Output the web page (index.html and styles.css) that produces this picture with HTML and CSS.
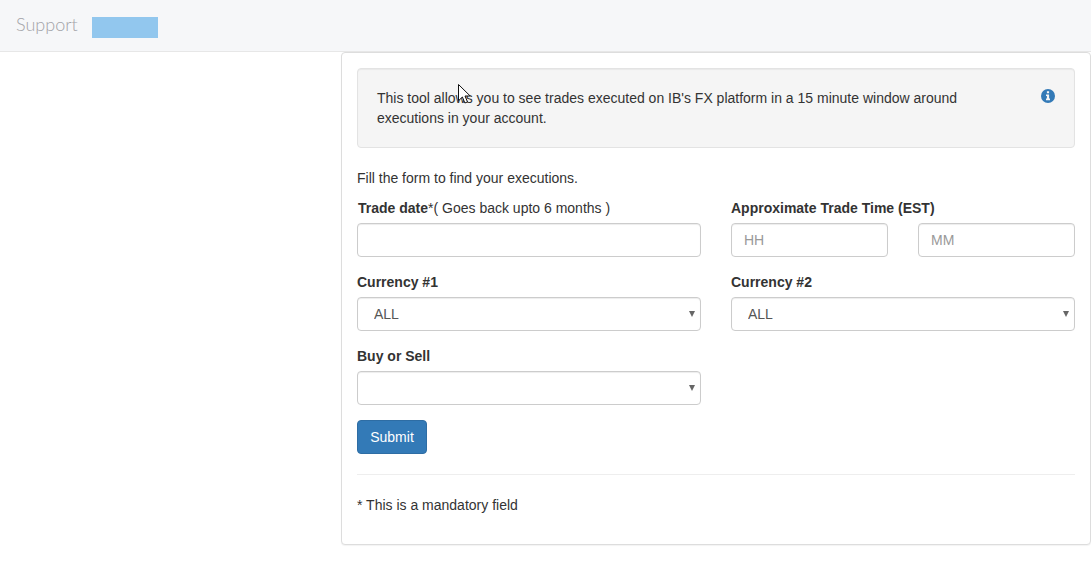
FILE: index.html
```html
<!DOCTYPE html>
<html lang="en">
<head>
<meta charset="utf-8">
<title>Support</title>
<link rel="stylesheet" href="styles.css">
</head>
<body>
<header class="topbar">
  <span class="brand">Support</span>
  <span class="redacted"></span>
</header>
<main class="layout">
  <section class="panel">
    <div class="well">
      <p class="well-text">This tool allows you to see trades executed on IB's FX platform in a 15 minute window around executions in your account.</p>
      <svg class="info-icon" viewBox="0 0 14 14" width="14" height="14" aria-hidden="true">
        <circle cx="7" cy="7" r="7" fill="#337ab7"/>
        <path d="M5.9 2.3h2.2v2H5.9z M5 5.4h3.1v4.2h.9v1.6H5V9.6h.9V7H5z" fill="#f5f5f5"/>
      </svg>
    </div>
    <p class="intro">Fill the form to find your executions.</p>
    <form class="form-grid">
      <div class="field">
        <label class="label label-nudged" for="date"><b>Trade date</b>*( Goes back upto 6 months )</label>
        <input class="control" id="date" type="text">
      </div>
      <div class="field">
        <label class="label" for="hh"><b>Approximate Trade Time (EST)</b></label>
        <div class="time-pair">
          <input class="control" id="hh" type="text" placeholder="HH">
          <input class="control" type="text" placeholder="MM">
        </div>
      </div>
      <div class="field">
        <label class="label" for="c1"><b>Currency #1</b></label>
        <div class="select-wrap">
          <select class="control select" id="c1"><option>ALL</option></select>
        </div>
      </div>
      <div class="field">
        <label class="label" for="c2"><b>Currency #2</b></label>
        <div class="select-wrap">
          <select class="control select" id="c2"><option>ALL</option></select>
        </div>
      </div>
      <div class="field">
        <label class="label" for="side"><b>Buy or Sell</b></label>
        <div class="select-wrap">
          <select class="control select" id="side"><option></option></select>
        </div>
      </div>
    </form>
    <button class="btn" type="button">Submit</button>
    <hr class="rule">
    <p class="note">* This is a mandatory field</p>
  </section>
</main>
<svg class="cursor" viewBox="0 0 14 22" width="14" height="22" aria-hidden="true">
  <path d="M.5.5v16.2l3.9-3.7 2.5 6 2.6-1.1-2.5-5.9h5.2z" fill="#fff" stroke="#111" stroke-width="1"/>
</svg>
</body>
</html>
```
FILE: styles.css
```css
* { box-sizing: border-box; }
html, body { margin: 0; height: 100%; }
body {
  position: relative;
  overflow: hidden;
  background: #fff;
  color: #333;
  font: 14px/20px "Liberation Sans", Arial, sans-serif;
}
.topbar {
  display: flex;
  align-items: flex-start;
  height: 52px;
  padding: 17px 0 0 16px;
  background: #f6f7f9;
  border-bottom: 1px solid #e7e7e7;
}
.brand {
  width: 76px;
  color: #a3a3a8;
  font: 300 18px/15px Lato, "Open Sans", sans-serif;
}
.redacted {
  width: 66px;
  height: 21px;
  background: #92c7ee;
}
.layout { padding-left: 341px; }
.panel {
  width: 750px;
  height: 493px;
  padding: 15px;
  background: #fff;
  border: 1px solid #ddd;
  border-radius: 4px;
  box-shadow: 0 1px 1px rgba(0, 0, 0, .05);
}
.well {
  display: flex;
  justify-content: space-between;
  align-items: flex-start;
  height: 80px;
  padding: 19px;
  background: #f5f5f5;
  border: 1px solid #e3e3e3;
  border-radius: 4px;
  box-shadow: inset 0 1px 1px rgba(0, 0, 0, .05);
}
.well-text { margin: 0; width: 600px; }
.info-icon { margin: 1px 0 0; flex: none; }
.intro { margin: 20px 0 10px; }
.form-grid {
  display: grid;
  grid-template-columns: 344px 344px;
  column-gap: 30px;
  row-gap: 15px;
}
.label { display: block; margin-bottom: 5px; }
.label-nudged { padding-left: 1px; }
.control {
  display: block;
  width: 100%;
  height: 34px;
  padding: 6px 12px;
  background: #fff;
  border: 1px solid #ccc;
  border-radius: 4px;
  box-shadow: inset 0 1px 1px rgba(0, 0, 0, .075);
  color: #555;
  font: 14px/20px "Liberation Sans", Arial, sans-serif;
}
.control::placeholder { color: #999; opacity: 1; }
.time-pair {
  display: grid;
  grid-template-columns: 157px 157px;
  column-gap: 30px;
}
.select-wrap { position: relative; }
.select-wrap::after {
  content: "";
  position: absolute;
  top: 14px;
  right: 6px;
  border-left: 3px solid transparent;
  border-right: 3px solid transparent;
  border-top: 6px solid #666;
  pointer-events: none;
}
.select {
  appearance: none;
  -webkit-appearance: none;
  padding-left: 16px;
}
.btn {
  display: block;
  width: 70px;
  height: 34px;
  margin-top: 15px;
  padding: 0;
  background: #337ab7;
  border: 1px solid #2e6da4;
  border-radius: 4px;
  color: #fff;
  font: 14px/20px "Liberation Sans", Arial, sans-serif;
}
.rule {
  margin: 20px 0;
  border: 0;
  border-top: 1px solid #eee;
}
.note { margin: 0; }
.cursor {
  position: absolute;
  left: 458px;
  top: 84px;
}
```
